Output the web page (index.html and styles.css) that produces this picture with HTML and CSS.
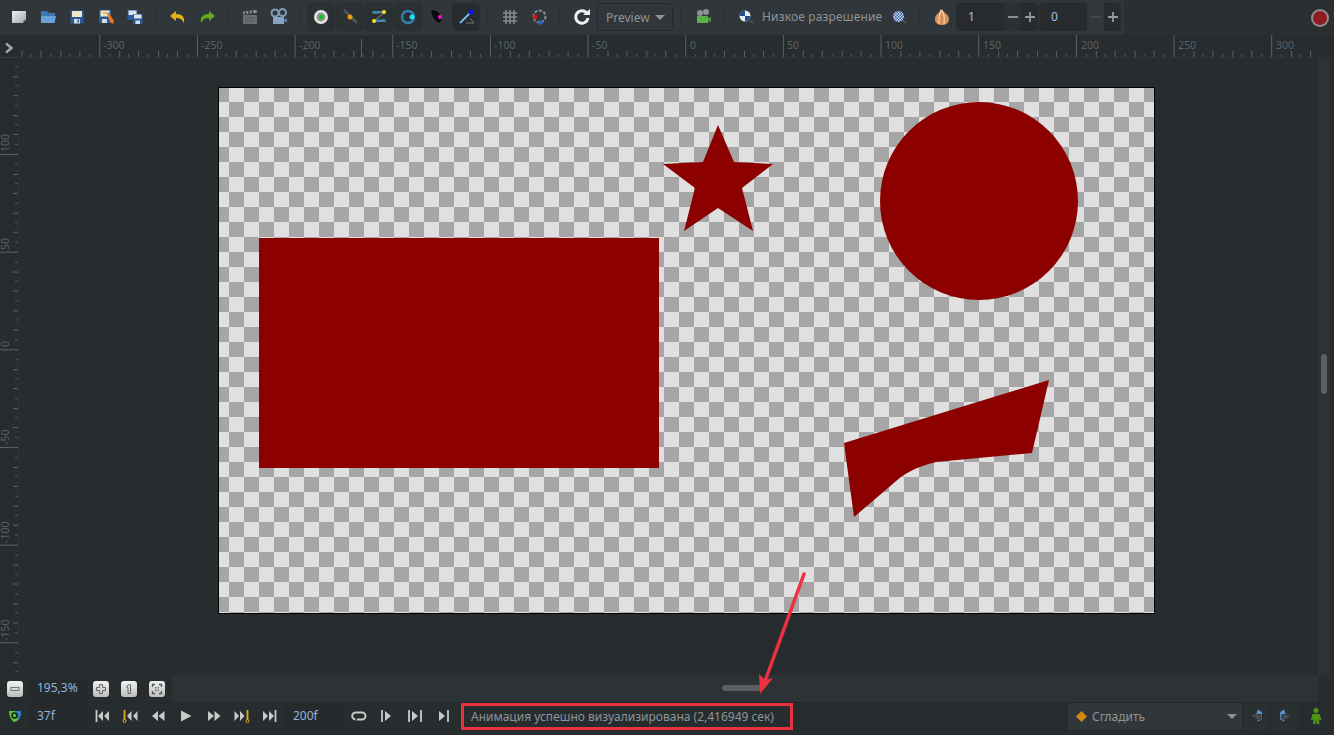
FILE: index.html
```html
<!DOCTYPE html>
<html lang="ru">
<head>
<meta charset="utf-8">
<title>Synfig Studio</title>
<link rel="stylesheet" href="styles.css">
</head>
<body>
<div class="app">
  <header class="topbar">
    <div class="toolbar">
      <span class="tool"><svg class="ico" viewBox="0 0 20 20"><defs><linearGradient id="pg" x1="0" y1="0" x2="1" y2="1"><stop offset="0" stop-color="#f2f2f2"/><stop offset="1" stop-color="#a5a5a5"/></linearGradient></defs><path d="M3 4h14v9l-3 3H3z" fill="url(#pg)"/><path d="M14 16l1-3h2z" fill="#555"/></svg></span>
      <span class="tool"><svg class="ico" viewBox="0 0 20 20"><path d="M3 4h6l2 2h6v9H3z" fill="#3f74b2"/><path d="M3 9h15l-1.500 7H3z" fill="#6b9fd6"/></svg></span>
      <span class="tool"><svg class="ico" viewBox="0 0 20 20"><rect x="3.500" y="3.500" width="13" height="13" fill="#2a5a9e"/><rect x="5" y="4" width="10" height="6" fill="#ece7c4"/><rect x="7" y="12" width="6" height="4.500" fill="#d5dbe3"/><rect x="10.500" y="12.500" width="1.500" height="3" fill="#2a5a9e"/></svg></span>
      <span class="tool"><svg class="ico" viewBox="0 0 20 20"><rect x="3" y="3" width="12" height="13" fill="#2a5a9e"/><rect x="4.500" y="3.500" width="9" height="6" fill="#ece7c4"/><rect x="6" y="12" width="5" height="4" fill="#d5dbe3"/><path d="M11 7l2-1 5 8-1 3-3-2z" fill="#e8781e"/><path d="M7 6h6" stroke="#e8781e"/></svg></span>
      <span class="tool"><svg class="ico" viewBox="0 0 20 20"><rect x="2.500" y="3" width="10" height="10" fill="#2a5a9e"/><rect x="3.500" y="3.500" width="8" height="4.500" fill="#dfe3e8"/><rect x="8" y="7" width="9.500" height="10" fill="#2a5a9e"/><rect x="9" y="7.500" width="7.500" height="4" fill="#dfe3e8"/><rect x="10.500" y="13.500" width="4.500" height="3.500" fill="#d5dbe3"/></svg></span>
      <span class="sep"></span>
      <span class="tool"><svg class="ico" viewBox="0 0 20 20"><path d="M8 4L2 9l6 5v-3c4 0 6 1 8 5 1-6-2-9-8-9z" fill="#e3b313"/></svg></span>
      <span class="tool"><svg class="ico" viewBox="0 0 20 20"><path d="M12 4l6 5-6 5v-3c-4 0-6 1-8 5-1-6 2-9 8-9z" fill="#5fae16"/></svg></span>
      <span class="sep"></span>
      <span class="tool"><svg class="ico" viewBox="0 0 20 20"><rect x="3" y="8" width="14" height="9" rx="1" fill="#6c6f70"/><path d="M3 4.500L16.500 3l.5 3L3 7.500z" fill="#8b8e8f"/><path d="M5 4.500l1 3M8.500 4l1 3M12 3.800l1 3" stroke="#2c2f31" stroke-width="1.300"/><path d="M5 11h10M5 14h10" stroke="#555" stroke-width="1"/></svg></span>
      <span class="tool"><svg class="ico" viewBox="0 0 20 20"><circle cx="6" cy="6" r="3.500" fill="none" stroke="#7d9ab8" stroke-width="2"/><circle cx="13.500" cy="5.500" r="3.500" fill="none" stroke="#7d9ab8" stroke-width="2"/><rect x="4" y="10" width="11" height="7" fill="#8aa3be"/><path d="M15 12.500l3-1v4l-3-1z" fill="#5b7fa6"/></svg></span>
      <span class="sep"></span>
      <span class="tool box"><svg class="ico" viewBox="0 0 20 20"><circle cx="10" cy="10" r="7" fill="#e6e6e6"/><circle cx="10" cy="10" r="4.500" fill="#9a9a9a"/><circle cx="10" cy="10" r="2.500" fill="#17c22a"/></svg></span>
      <span class="tool box gap"><svg class="ico" viewBox="0 0 20 20"><path d="M4 3l13 13" stroke="#50565a" stroke-width="2.500"/><circle cx="10" cy="10" r="2.500" fill="#f09a12"/></svg></span>
      <span class="tool box gap"><svg class="ico" viewBox="0 0 20 20"><path d="M3 4h10l2 2-11 1zM5 13l11-1 1 3H6z" fill="#3c86ad"/><path d="M15 6L5 14" stroke="#8a9094"/><circle cx="15" cy="5" r="2" fill="#f5e71d"/><circle cx="5" cy="14" r="2" fill="#f5e71d"/></svg></span>
      <span class="tool box gap"><svg class="ico" viewBox="0 0 20 20"><circle cx="10" cy="10" r="6" fill="none" stroke="#2f7fb0" stroke-width="2.500"/><circle cx="14" cy="10" r="2.500" fill="#1fe3ec"/></svg></span>
      <span class="tool slim"><svg class="ico" viewBox="0 0 20 20"><path d="M4 3c5 0 9 3 11 8l-2 5c-5-1-8-6-9-13z" fill="#0a0a0a"/><circle cx="13" cy="10" r="2" fill="#ef18d8"/></svg></span>
      <span class="tool box active"><svg class="ico" viewBox="0 0 20 20"><path d="M4 16L15 5" stroke="#6ec3e8" stroke-width="1.800"/><path d="M10 16h8l-4-5" fill="none" stroke="#777"/><circle cx="15" cy="5" r="2.500" fill="#0b14e6"/></svg></span>
      <span class="sep wide"></span>
      <span class="tool"><svg class="ico" viewBox="0 0 20 20"><path d="M6 3v14M10 3v14M14 3v14M3 6h14M3 10h14M3 14h14" stroke="#85898b" stroke-width="1.600"/></svg></span>
      <span class="tool"><svg class="ico" viewBox="0 0 20 20"><circle cx="10.500" cy="9.500" r="6" fill="none" stroke="#8b8f92" stroke-width="2" stroke-dasharray="3 1.500"/><circle cx="6" cy="10" r="2.500" fill="#c61818"/><circle cx="11.500" cy="15.500" r="2.300" fill="#2c62c9"/></svg></span>
      <span class="sep"></span>
      <span class="tool"><svg class="ico" viewBox="0 0 20 20"><path d="M15 6.500A6.200 6.200 0 1 0 16 11" fill="none" stroke="#f0f0f0" stroke-width="3"/><path d="M11 8h7V2z" fill="#f0f0f0"/></svg></span>
      <span class="combo preview">Preview<i class="caret"></i></span>
      <span class="sep mid"></span>
      <span class="tool"><svg class="ico" viewBox="0 0 20 20"><circle cx="7" cy="6" r="3" fill="#8c9296"/><circle cx="13" cy="5" r="3" fill="#8c9296"/><rect x="4" y="9" width="11" height="7" fill="#5cae4a"/><path d="M15 11l3-1v5l-3-1z" fill="#4a953b"/></svg></span>
      <span class="sep"></span>
      <span class="tool"><svg class="ico" viewBox="0 0 20 20"><circle cx="9" cy="9" r="5.500" fill="#e9eef3"/><path d="M9 3.500A5.500 5.500 0 0 0 3.500 9H9zM9 9h5.500A5.500 5.500 0 0 1 9 14.500z" fill="#1f4f91"/><path d="M14 14l3 2" stroke="#6f7477"/></svg></span>
      <span class="res-label">Низкое разрешение</span>
      <span class="tool"><svg class="ico" viewBox="0 0 20 20"><defs><pattern id="ck" width="3" height="3" patternUnits="userSpaceOnUse"><rect width="3" height="3" fill="#d6dfec"/><rect width="1.500" height="1.500" fill="#2b5ba8"/><rect x="1.500" y="1.500" width="1.500" height="1.500" fill="#2b5ba8"/></pattern></defs><circle cx="9.500" cy="9.500" r="5.500" fill="url(#ck)"/><path d="M14 14l3 2" stroke="#6f7477"/></svg></span>
      <span class="sep"></span>
      <span class="tool"><svg class="ico" viewBox="0 0 20 20"><path d="M9 2c0 3-6 5-6 10 0 4 3 6 7 6s7-2 7-6c0-5-5-6-8-10z" fill="#d9905a"/><path d="M9 3c-1 4-3 7-2 14M10 3c2 4 3 8 2 14" fill="none" stroke="#f3d3ab" stroke-width="1.200"/></svg></span>
      <span class="spin">
        <span class="spin-val">1</span>
        <span class="spin-btn lit"><svg class="pm" viewBox="0 0 12 12"><path d="M1 6h10" stroke="#96999b" stroke-width="1.800"/></svg></span>
        <span class="spin-btn"><svg class="pm" viewBox="0 0 12 12"><path d="M1 6h10M6 1v10" stroke="#96999b" stroke-width="1.800"/></svg></span>
      </span>
      <span class="spin second">
        <span class="spin-val">0</span>
        <span class="spin-btn off"><svg class="pm" viewBox="0 0 12 12"><path d="M1 6h10" stroke="#4a4f52" stroke-width="1.800"/></svg></span>
        <span class="spin-btn"><svg class="pm" viewBox="0 0 12 12"><path d="M1 6h10M6 1v10" stroke="#96999b" stroke-width="1.800"/></svg></span>
      </span>
    </div>
    <div class="topbar-end">
      <span class="rec"></span>
    </div>
  </header>

  <div class="ruler-row">
    <span class="corner"><svg class="chev" viewBox="0 0 10 12"><path d="M2 1.500L7.500 6 2 10.500" fill="none" stroke="#a4a7a9" stroke-width="2.400"/></svg></span>
    <svg class="ruler-h" viewBox="18 35 1300 22" shape-rendering="crispEdges">
      <defs>
        <pattern id="tickh" x="1.600" y="35" width="97.660" height="22" patternUnits="userSpaceOnUse">
          <path d="M0.500 0v22" stroke="#5a6165"/>
          <path d="M10 19v3M29.500 19v3M49 19v3M68.500 19v3M88 19v3" stroke="#4f565a"/>
          <path d="M20 16v6M39 16v6M59 16v6M78 16v6" stroke="#5a6165"/>
        </pattern>
      </defs>
      <rect x="18" y="35" width="1300" height="22" fill="url(#tickh)"/>
      <path d="M361.500 39v18" stroke="#5a6165"/>
      <g class="rt">
        <text x="103" y="49">-300</text><text x="201" y="49">-250</text><text x="299" y="49">-200</text><text x="396" y="49">-150</text>
        <text x="494" y="49">-100</text><text x="592" y="49">-50</text><text x="690" y="49">0</text><text x="787" y="49">50</text>
        <text x="885" y="49">100</text><text x="983" y="49">150</text><text x="1081" y="49">200</text><text x="1178" y="49">250</text><text x="1276" y="49">300</text>
      </g>
    </svg>
  </div>

  <div class="main">
    <svg class="ruler-v" viewBox="0 57 18 618" shape-rendering="crispEdges">
      <defs>
        <pattern id="tickv" x="0" y="56.340" width="18" height="97.660" patternUnits="userSpaceOnUse">
          <path d="M0 0.500h18" stroke="#5a6165"/>
          <path d="M15 10h3M15 29.500h3M15 49h3M15 68.500h3M15 88h3" stroke="#4f565a"/>
          <path d="M13 20h5M13 39h5M13 59h5M13 78h5" stroke="#5a6165"/>
        </pattern>
      </defs>
      <rect x="0" y="57" width="18" height="618" fill="url(#tickv)"/>
      <g class="rt">
        <text transform="translate(9 152) rotate(-90)">100</text>
        <text transform="translate(9 250) rotate(-90)">50</text>
        <text transform="translate(9 347) rotate(-90)">0</text>
        <text transform="translate(9 445) rotate(-90)">-50</text>
        <text transform="translate(9 543) rotate(-90)">-100</text>
        <text transform="translate(9 641) rotate(-90)">-150</text>
      </g>
    </svg>
    <div class="stage">
      <svg class="canvas" viewBox="219 88 935 525">
        <g fill="#8d0000">
          <rect x="259" y="238" width="400" height="230"/>
          <circle cx="979" cy="201" r="99"/>
          <polygon points="718,125 734,162 773,164 742,188 753,231 718,208 684,231 695,188 663,164 703,162"/>
          <path d="M1049 380L1032 453 936 462Q918 466 902 476L854 517 844 443Z"/>
        </g>
      </svg>
    </div>
    <div class="vscroll"><span class="vthumb"></span></div>
  </div>

  <div class="zoombar">
    <div class="zoom-group">
      <span class="zslot"><span class="zbtn"><svg class="zi" viewBox="0 0 12 12"><rect x="2" y="4.500" width="8" height="3" fill="none" stroke="#777"/></svg></span></span>
      <span class="field">195,3%</span>
      <span class="zslot wide"><span class="zbtn"><svg class="zi" viewBox="0 0 12 12"><path d="M4.500 1.500h3v3h3v3h-3v3h-3v-3h-3v-3h3z" fill="none" stroke="#666"/></svg></span></span>
      <span class="zslot wide"><span class="zbtn"><svg class="zi" viewBox="0 0 12 12"><path d="M4 3l2.500-1.500h1v9H5v-6H4z" fill="none" stroke="#666"/></svg></span></span>
      <span class="zslot wide"><span class="zbtn"><svg class="zi" viewBox="0 0 12 12"><path d="M1.500 4V1.500H4M8 1.500h2.500V4M10.500 8v2.500H8M4 10.500H1.500V8" fill="none" stroke="#555" stroke-width="1.300"/><path d="M4 4h1.500v1.500H4zM6.500 4H8v1.500H6.500zM4 6.500h1.500V8H4zM6.500 6.500H8V8H6.500z" fill="#777"/></svg></span></span>
    </div>
    <div class="hscroll"><span class="hthumb"></span></div>
  </div>

  <footer class="statusbar">
    <span class="zslot"><svg class="ico small" viewBox="0 0 16 16"><path d="M2 3h12c0 6-2 10-7 11-3-2-5-6-5-11z" fill="#5fbf3a"/><path d="M8 3h6c0 4-1 7-3 9z" fill="#2e7fc4"/><circle cx="7.500" cy="7.500" r="2.500" fill="none" stroke="#10241a" stroke-width="1.500"/></svg></span>
    <span class="field">37f</span>
    <span class="tbtn"><svg class="ti" viewBox="0 0 16 14"><path d="M2.500 1v12" stroke="#c9c9c9" stroke-width="1.800"/><path d="M9 2v10L4 7zM15 2v10L10 7z" fill="#c9c9c9"/></svg></span>
    <span class="tbtn"><svg class="ti" viewBox="0 0 16 14"><path d="M2.500 1v10" stroke="#d9ab1d" stroke-width="1.800"/><circle cx="2.500" cy="12" r="1.500" fill="none" stroke="#d9ab1d"/><path d="M9.500 2v10L5 7zM15.500 2v10L11 7z" fill="#c9c9c9"/></svg></span>
    <span class="tbtn"><svg class="ti" viewBox="0 0 16 14"><path d="M8 2v10L2 7zM14.500 2v10L8.500 7z" fill="#c9c9c9"/></svg></span>
    <span class="tbtn"><svg class="ti" viewBox="0 0 16 14"><path d="M3 1.500v11L13.500 7z" fill="#c9c9c9"/></svg></span>
    <span class="tbtn"><svg class="ti" viewBox="0 0 16 14"><path d="M2 2v10l6-5zM8.500 2v10l6-5z" fill="#c9c9c9"/></svg></span>
    <span class="tbtn"><svg class="ti" viewBox="0 0 16 14"><path d="M.5 2v10L5 7zM6 2v10l4.500-5z" fill="#c9c9c9"/><path d="M13.500 1v10" stroke="#d9ab1d" stroke-width="1.800"/><circle cx="13.500" cy="12" r="1.500" fill="none" stroke="#d9ab1d"/></svg></span>
    <span class="tbtn"><svg class="ti" viewBox="0 0 16 14"><path d="M1 2v10l5-5zM7 2v10l5-5z" fill="#c9c9c9"/><path d="M13.500 1v12" stroke="#c9c9c9" stroke-width="1.800"/></svg></span>
    <span class="field end">200f</span>
    <span class="tbtn"><svg class="ti" viewBox="0 0 16 14"><path d="M5 3.500h6a3.500 3.500 0 0 1 0 7H6M4.500 10.500A3.500 3.500 0 0 1 5 3.500" fill="none" stroke="#c9c9c9" stroke-width="2"/></svg></span>
    <span class="tbtn"><svg class="ti" viewBox="0 0 16 14"><path d="M3 1v12" stroke="#c9c9c9" stroke-width="1.800"/><path d="M6 2v10l6-5z" fill="#c9c9c9"/></svg></span>
    <span class="tbtn"><svg class="ti" viewBox="0 0 16 14"><path d="M2 1v12M14 1v12" stroke="#c9c9c9" stroke-width="1.800"/><path d="M5 2v10l6-5z" fill="#c9c9c9"/></svg></span>
    <span class="tbtn"><svg class="ti" viewBox="0 0 16 14"><path d="M13 1v12" stroke="#c9c9c9" stroke-width="1.800"/><path d="M4 2v10l6-5z" fill="#c9c9c9"/></svg></span>
    <span class="status-msg">Анимация успешно визуализирована (2,416949 сек)</span>
    <span class="grow"></span>
    <span class="combo blend"><svg class="dia" viewBox="0 0 12 12"><path d="M6 0l6 6-6 6-6-6z" fill="#d5860f"/></svg>Сгладить<i class="caret right"></i></span>
    <span class="kbtn"><svg class="ico small" viewBox="0 0 20 20"><path d="M11 2l5 3v9l-5 3-1-5-6-2 6-4z" fill="#5f97d2"/><rect x="7" y="8" width="8" height="6" rx="1" fill="#4c4f51" stroke="#222"/></svg></span>
    <span class="kbtn"><svg class="ico small" viewBox="0 0 20 20"><path d="M9 2L4 5v9l5 3 1-5 6-2-6-4z" fill="#5f97d2"/><rect x="6" y="8" width="8" height="6" rx="1" fill="#4c4f51" stroke="#222"/></svg></span>
    <span class="man"><svg class="ico" viewBox="0 0 20 20"><circle cx="10" cy="4.500" r="2.500" fill="#4f9a14"/><path d="M6.500 8h7l2 6h-2l-1-3 1 7h-2.500L10 13l-.5 5H7l1-7-1 3H5z" fill="#4f9a14"/></svg></span>
  </footer>

  <svg class="annot" viewBox="0 0 60 135">
    <path d="M53 2L13 112" stroke="#ee3040" stroke-width="3.500" stroke-linecap="round"/>
    <path d="M9 122L8 102 14 108 22 106z" fill="#ee3040"/>
  </svg>
</div>
</body>
</html>
```

FILE: styles.css
```css
* { box-sizing: border-box; }
html, body { margin: 0; height: 100%; background: #272c2f; }
body { overflow: hidden; font-family: "Noto Sans", "Open Sans", sans-serif; font-size: 12px; color: #8f9497; }

.app { position: relative; width: 1334px; height: 735px; display: flex; flex-direction: column; background: #272c2f; }

/* top bar */
.topbar { height: 35px; display: flex; flex: none; background: #2a2f32; }
.toolbar { width: 1124px; height: 35px; flex: none; padding: 3px 0 4px 4px; display: flex; align-items: stretch; background: #31363a; }
.topbar-end { flex: 1; display: flex; align-items: center; justify-content: flex-end; padding-right: 7px; }
.tool { width: 29px; flex: none; display: flex; align-items: center; justify-content: center; }
.tool.box { width: 28px; background: #2b3033; border: 1px solid #292e31; border-radius: 4px; }
.tool.gap { margin-left: 1px; }
.tool.slim { width: 30px; }
.tool.active { background: #272b2e; }
.ico { width: 20px; height: 20px; display: block; }
.ico.small { width: 16px; height: 16px; }
.sep { width: 1px; flex: none; margin: 0 7px 0 6px; background: #2c3134; }
.sep.wide { margin: 0 7px; }
.sep.mid { margin: 0 7px 0 7px; }

.combo { display: flex; align-items: center; border-radius: 4px; color: #8f9497; }
.preview { width: 76px; margin-left: 1px; padding-left: 8px; border: 1px solid #24282a; background: #31363a; }
.caret { width: 0; height: 0; margin-left: 5px; border-left: 5px solid transparent; border-right: 5px solid transparent; border-top: 5px solid #8f9497; }
.caret.right { margin-left: auto; }
.res-label { width: 124px; flex: none; padding-left: 2px; line-height: 28px; white-space: nowrap; letter-spacing: .15px; color: #8f9497; }

.spin { width: 82px; flex: none; display: flex; background: #272b2e; border-radius: 4px; }
.spin.second { margin-left: 1px; }
.spin-val { flex: 1; padding-left: 12px; line-height: 28px; color: #9cc0e6; }
.spin-btn { width: 17px; display: flex; align-items: center; justify-content: center; }
.spin-btn.lit { background: #2b3033; }
.spin-btn.off { background: #32373a; }
.pm { width: 12px; height: 12px; }

.rec { width: 14px; height: 14px; border-radius: 50%; background: #8e1c1f; box-shadow: 0 0 0 2px #8f8f8f; }

/* rulers */
.ruler-row { height: 22px; flex: none; display: flex; }
.corner { width: 18px; display: flex; align-items: center; justify-content: center; padding-top: 4px; }
.chev { width: 10px; height: 12px; }
.ruler-h { width: 1300px; height: 22px; display: block; }
.ruler-v { width: 18px; height: 618px; flex: none; display: block; }
.rt { font-family: "Noto Sans", sans-serif; font-size: 10.500px; fill: #596166; }

/* stage */
.main { height: 618px; flex: none; display: flex; border-top: 0; }
.stage { flex: 1; padding: 30px 0 0 200px; box-shadow: inset 1px 1px 0 #2e3336; }
.canvas {
  display: block; width: 937px; height: 527px; border: 1px solid #000;
  background-color: #e0e0e0;
  background-image: conic-gradient(#a6a6a6 25%, #e0e0e0 0 50%, #a6a6a6 0 75%, #e0e0e0 0);
  background-size: 30px 30px;
  background-position: -20px -1px;
}
.vscroll { width: 12px; margin-right: 4px; flex: none; padding-top: 297px; background: #2d3235; }
.vthumb { display: block; width: 6px; height: 40px; margin-left: 3px; border-radius: 3px; background: #595f63; }

/* zoom row */
.zoombar { height: 27px; flex: none; display: flex; }
.zoom-group { width: 172px; flex: none; display: flex; align-items: stretch; }
.zslot { width: 29px; flex: none; display: flex; align-items: center; justify-content: center; }
.zslot.wide { width: 28px; }
.zslot.wide:first-of-type { margin-left: 1px; }
.zbtn { width: 16px; height: 16px; border-radius: 3px; display: flex; align-items: center; justify-content: center; background: linear-gradient(#f1f1f1, #bdbdbd); }
.zi { width: 12px; height: 12px; }
.field { width: 58px; flex: none; padding-left: 8px; line-height: 26px; color: #8fb3d9; background: #262a2d; border-radius: 4px; }
.hscroll { width: 1146px; display: flex; justify-content: center; padding: 10px 0 0 0; background: #2d3235; }
.hthumb { width: 40px; height: 6px; margin-left: -6px; border-radius: 3px; background: #595f63; }

/* status row */
.statusbar { height: 33px; flex: none; display: flex; align-items: center; padding-bottom: 5px; box-shadow: inset 0 1px 0 #24282a; }
.statusbar > .field { align-self: stretch; line-height: 28px; }
.statusbar > .zslot { align-self: stretch; }
.field.end { margin-left: 1px; margin-right: 1px; }
.tbtn { width: 28px; flex: none; display: flex; align-items: center; justify-content: center; }
.field + .tbtn { margin-left: 1px; }
.ti { width: 16px; height: 14px; }
.status-msg { width: 332px; height: 27px; flex: none; margin-left: 4px; padding-left: 7px; line-height: 21px; border: 3px solid #e8303f; white-space: nowrap; color: #8f9497; }
.grow { flex: 1; }
.blend { width: 174px; height: 27px; flex: none; padding: 0 5px 0 8px; background: #31363a; }
.dia { width: 11px; height: 11px; margin-right: 5px; }
.kbtn { width: 26px; height: 27px; flex: none; margin-left: 2px; display: flex; align-items: center; justify-content: center; background: #2a2f32; border-radius: 4px; }
.man { width: 36px; flex: none; display: flex; justify-content: center; }

/* annotation arrow over the window */
.annot { position: absolute; left: 751px; top: 572px; width: 60px; height: 135px; }
```
